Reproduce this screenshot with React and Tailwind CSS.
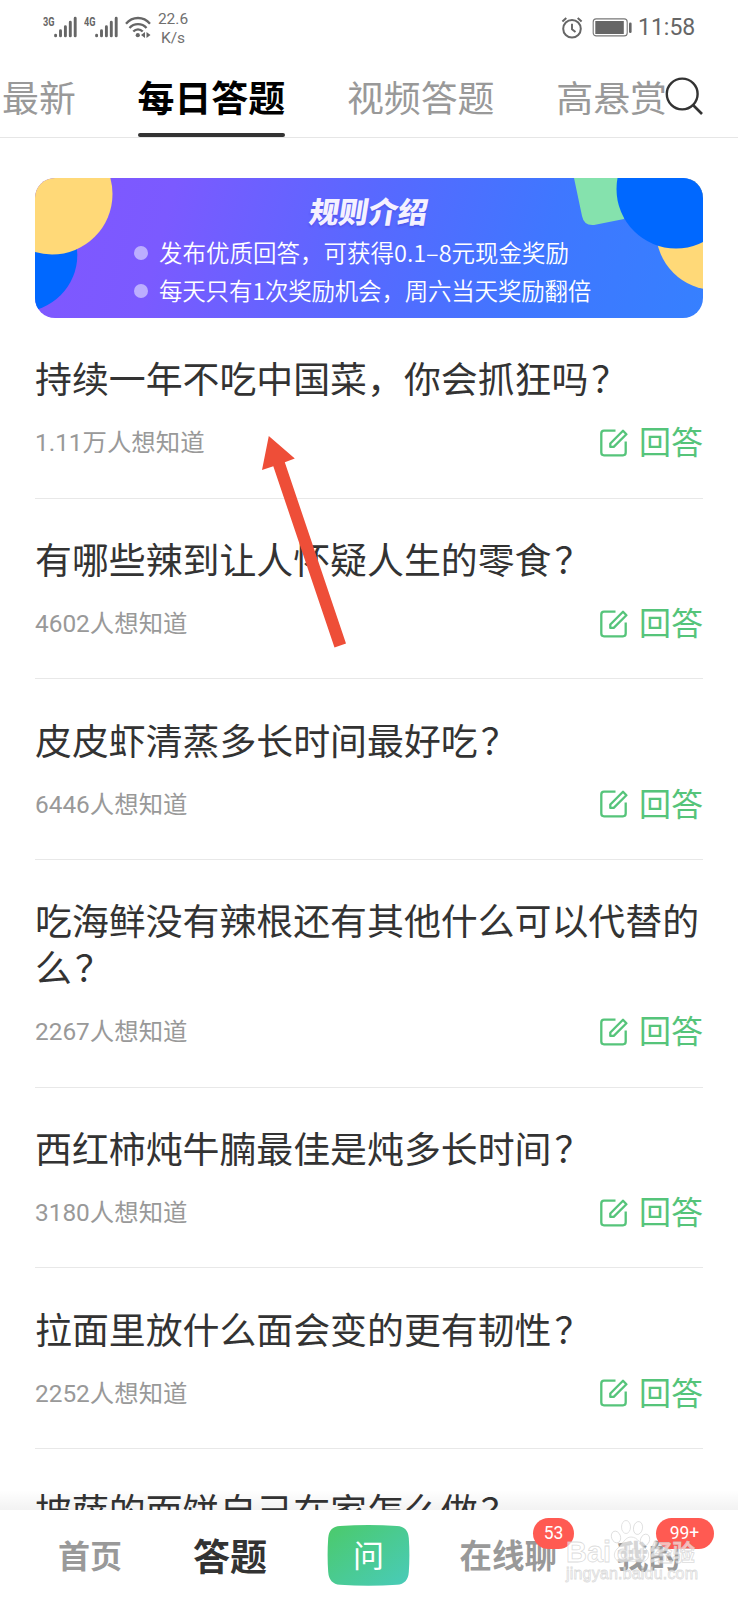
import React from "react";

const questions = [
  { title: "持续一年不吃中国菜，你会抓狂吗", count: "1.11万" },
  { title: "有哪些辣到让人怀疑人生的零食", count: "4602" },
  { title: "皮皮虾清蒸多长时间最好吃", count: "6446" },
  { title: "吃海鲜没有辣根还有其他什么可以代替的么", count: "2267" },
  { title: "西红柿炖牛腩最佳是炖多长时间", count: "3180" },
  { title: "拉面里放什么面会变的更有韧性", count: "2252" },
  { title: "披萨的面饼自己在家怎么做", count: "1986" },
];

function Signal({ label }) {
  return (
    <svg width="36" height="24" viewBox="0 0 36 24" className="text-[#666]">
      <text x="0" y="9.5" fontSize="12" fontWeight="700" fill="currentColor" textLength="11.5" lengthAdjust="spacingAndGlyphs" fontFamily="Roboto, sans-serif">
        {label}
      </text>
      <g stroke="currentColor" strokeWidth="2.9" strokeLinecap="round">
        <path d="M12.6 19.3v.6M17.5 14.8v5.1M22.4 10.8v9.1M27.3 6.2v13.7M32.2 2.2v17.7" />
      </g>
    </svg>
  );
}

function StatusBar() {
  return (
    <div className="flex h-[58px] shrink-0 items-start pl-[43px] pr-[43px] text-[#666]">
      <div className="flex pt-4">
        <Signal label="3G" />
        <div className="w-[5px]" />
        <Signal label="4G" />
      </div>
      <svg width="28" height="24" viewBox="0 0 28 24" fill="none" stroke="currentColor" className="ml-[4px] mt-4">
        <path d="M2 7.7C8.500 .1 19.500 .1 26 7.700" strokeWidth="2.300" />
        <path d="M5.500 11.900C10 6.800 18 6.800 22.500 11.900" strokeWidth="2.300" />
        <path d="M9.300 15.600C12 12.600 16 12.600 18.700 15.600" strokeWidth="2.300" />
        <circle cx="13.800" cy="19.200" r="2.100" fill="currentColor" stroke="none" />
        <path d="M21 16v6l-4-3zM22.500 16v6l4-3z" fill="currentColor" stroke="none" />
      </svg>
      <div className="ml-[5px] mt-[10px] w-[32px] text-center font-[Roboto,sans-serif] text-[15.5px] leading-[18.5px] text-[#707070]">
        22.6
        <br />
        K/s
      </div>
      <div className="flex-1" />
      <svg width="22" height="22" viewBox="0 0 22 22" fill="none" stroke="currentColor" className="mt-[17px]">
        <circle cx="11" cy="11.800" r="8.800" strokeWidth="2" />
        <path d="M11 6.800v5.400l3.500 2.900" strokeWidth="1.900" />
        <path d="M1.400 4.400 5.300 1M20.600 4.400 16.700 1" strokeWidth="2" />
      </svg>
      <svg width="40" height="19" viewBox="0 0 40 19" fill="none" className="ml-[9px] mt-[18px]">
        <rect x="1.200" y=".9" width="34" height="17" rx="3" stroke="#777" strokeWidth="1.100" />
        <rect x="3.300" y="3" width="28.500" height="13" fill="#666" />
        <rect x="37" y="4.500" width="2.600" height="10.500" rx="1.200" fill="#666" />
      </svg>
      <div className="ml-[6px] mt-[14px] w-[57px] whitespace-nowrap font-[Roboto,sans-serif] text-[23px] leading-[28px]">11:58</div>
    </div>
  );
}

function Tabs() {
  return (
    <div className="flex h-[80px] shrink-0 border-b border-[#e6e6e6] text-[36.900px] leading-[76px] text-[#999]">
      <div className="flex w-[665px] gap-[61.800px] overflow-hidden whitespace-nowrap pl-[2px]">
        <span>最新</span>
        <span className="flex shrink-0 flex-col font-bold text-black">
          <span className="h-[75px]">每日答题</span>
          <span className="h-[4px] rounded-full bg-[#333]" />
        </span>
        <span>视频答题</span>
        <span>高悬赏</span>
      </div>
      <svg width="38" height="40" viewBox="0 0 38 40" fill="none" stroke="#333" strokeWidth="2.400" className="mt-[18px]">
        <circle cx="17.200" cy="18" r="15.400" />
        <path d="m28 29 9 9" strokeWidth="2.600" />
      </svg>
    </div>
  );
}

function Banner() {
  return (
    <div className="relative ml-[35px] mt-[40px] h-[140px] w-[668px] shrink-0 overflow-hidden rounded-[20px] bg-[linear-gradient(105deg,#8057ff_0%,#7b5aff_20%,#5769ff_50%,#3f77ff_75%,#3680ff_100%)] text-white">
      <svg width="668" height="140" viewBox="0 0 668 140" className="absolute inset-0">
        <circle cx="-14.700" cy="77" r="57" fill="#0068ff" />
        <circle cx="17" cy="16" r="60.500" fill="#ffd978" />
        <path d="M539 0l8 38q2 10 12 9l30-6V0z" fill="#85e2ad" />
        <circle cx="680" cy="53" r="59" fill="#ffd978" />
        <circle cx="641" cy="11" r="59.500" fill="#0068ff" />
      </svg>
      <div className="relative">
        <div className="ml-[275px] mt-[12px] h-[42px] w-[130px] skew-x-[-9deg] whitespace-nowrap text-[29.500px] font-black leading-[40px] text-[#f4f1ff] [text-shadow:0_2px_2px_#453bcc66]">规则介绍</div>
        <div className="mt-px text-[23.500px] font-[350] leading-[38px]">
          <div className="flex items-center pl-[99px]">
            <span className="mr-[11px] mt-[2px] size-[14px] rounded-full bg-[#bcaeff]" />
            <span className="whitespace-nowrap">发布优质回答，可获得0.1–8元现金奖励</span>
          </div>
          <div className="flex items-center pl-[99px]">
            <span className="mr-[11px] mt-[2px] size-[14px] rounded-full bg-[#bcaeff]" />
            <span className="whitespace-nowrap tracking-[-0.2px]">每天只有1次奖励机会，周六当天奖励翻倍</span>
          </div>
        </div>
      </div>
    </div>
  );
}

function Question({ title, count }) {
  return (
    <li className="border-b border-[#e8e8e8] pt-[36.400px]">
      <h2 className="text-[36.900px] leading-[47px] text-[#333]">
        {title}
        <span className="inline-block translate-x-[3px]">？</span>
      </h2>
      <div className="flex h-[96.300px] items-start justify-between">
        <span className="mt-[24px] font-[Roboto,'Noto_Sans_CJK_SC',sans-serif] text-[24.400px] leading-[36px] text-[#999]">{count}人想知道</span>
        <span className="mt-[17px] flex items-start text-[32px] leading-[44px] text-[#55c47a]">
          <svg width="28" height="28" viewBox="0 0 28 28" fill="none" stroke="currentColor" strokeWidth="2.300" className="mr-[11px] mt-[10.500px]">
            <path d="M15.500 1.700H4Q1.300 1.700 1.300 4.400v19.200q0 2.700 2.700 2.700h19q2.700 0 2.700-2.700V12.500" />
            <path d="M10.300 14.500 23 1.800l3.400 3.400L13.700 17.900H10.300z" strokeLinejoin="round" />
          </svg>
          回答
        </span>
      </div>
    </li>
  );
}

function Watermark() {
  return (
    <svg width="150" height="76" viewBox="0 0 150 76" className="absolute left-[560px] top-[6px] font-['Liberation_Sans','Noto_Sans_CJK_SC',sans-serif] font-normal">
      <g fill="#fff" fillOpacity=".6" stroke="#ccc" strokeOpacity=".7" strokeWidth=".8">
        <ellipse cx="56" cy="21" rx="4.500" ry="6" transform="rotate(-20 56 21)" />
        <ellipse cx="66" cy="11" rx="4.500" ry="6.500" />
        <ellipse cx="78" cy="12" rx="4.500" ry="6.500" transform="rotate(10 78 12)" />
        <ellipse cx="85" cy="24" rx="4.500" ry="6" transform="rotate(20 85 24)" />
        <path d="M71 21c-6 0-8 7-13 11-7 6-3 15 5 14 6-1 10-1 16 0 9 1 13-8 6-14-5-4-7-11-14-11z" />
        <text x="6" y="46" fontSize="29" fontWeight="700" textLength="45" lengthAdjust="spacingAndGlyphs">Bai</text>
        <text x="57" y="44" fontSize="20" fontWeight="700" textLength="28" lengthAdjust="spacingAndGlyphs">du</text>
        <text x="90" y="45" fontSize="23" fontWeight="700" textLength="45" lengthAdjust="spacingAndGlyphs">经验</text>
        <text x="6" y="63" fontSize="16" textLength="132" lengthAdjust="spacing">jingyan.baidu.com</text>
      </g>
    </svg>
  );
}

function BottomNav() {
  return (
    <nav className="relative flex h-[90px] shrink-0 items-center bg-white pl-[58px] font-bold text-[#999]">
      <div className="absolute inset-x-0 -top-[20px] h-[20px] bg-gradient-to-b from-black/0 to-black/5" />
      <span className="-mt-[2px] w-[135px] text-[32px] leading-[46px]">首页</span>
      <span className="-mt-px w-[134px] text-[37px] leading-[50px] text-[#333]">答题</span>
      <span className="relative flex h-[60px] w-[83px] items-center justify-center">
        <svg width="83" height="61" viewBox="0 0 83 61" className="absolute inset-0">
          <defs>
            <linearGradient id="ask" x1="0" y1="0" x2="1" y2="1">
              <stop offset="0" stopColor="#4bca6a" />
              <stop offset="1" stopColor="#49cbba" />
            </linearGradient>
          </defs>
          <path d="M13 .9Q41.500-.7 70 .9Q81 1.500 81.800 13Q83 30 81.800 47Q81 59 70 59.800Q41.500 61.500 13 59.800Q2 59 1.200 47Q0 30 1.200 13Q2 1.500 13 .9z" fill="url(#ask)" />
        </svg>
        <span className="relative -mt-[3px] text-[31px] font-normal leading-[46px] text-white">问</span>
      </span>
      <span className="relative -mt-[2px] ml-[49.500px] w-[157px] text-[32.500px] leading-[46px]">
        在线聊
        <span className="absolute -top-[13px] left-[73.500px] flex h-[31px] w-[41px] items-center justify-center rounded-full bg-[#ff5a52] font-[Roboto,sans-serif] text-[17.500px] font-normal leading-none text-white">53</span>
      </span>
      <span className="relative -mt-[2px] text-[32px] leading-[46px]">
        我的
        <span className="absolute -top-[13px] left-[39px] flex h-[31px] w-[58px] items-center justify-center rounded-full bg-[#ff5a52] font-[Roboto,sans-serif] text-[17.500px] font-normal leading-none text-white">99+</span>
      </span>
      <Watermark />
    </nav>
  );
}

export default function App() {
  return (
    <div className="relative flex h-[1600px] w-[738px] flex-col overflow-hidden bg-white font-['Noto_Sans_CJK_SC',sans-serif]">
      <StatusBar />
      <Tabs />
      <main className="flex min-h-0 flex-1 flex-col overflow-hidden">
        <Banner />
        <ul className="mx-[35px] shrink-0">
          {questions.map((q) => (
            <Question key={q.title} title={q.title} count={q.count} />
          ))}
        </ul>
      </main>
      <BottomNav />
      <svg width="90" height="216" viewBox="0 0 90 216" className="absolute left-[260px] top-[434px]">
        <path d="M8.800 2 34.800 24.500 24.800 28.300 86 209.500 74.500 213.500 13.300 32.300 2 36z" fill="#ee4e38" />
      </svg>
    </div>
  );
}
